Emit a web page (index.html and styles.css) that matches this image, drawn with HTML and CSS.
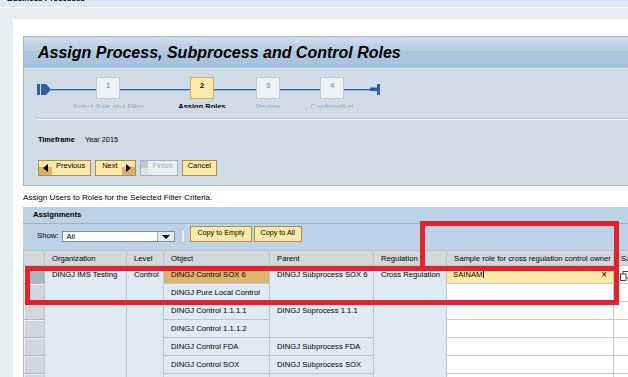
FILE: index.html
```html
<!DOCTYPE html>
<html lang="en">
<head>
    <meta charset="UTF-8">
    <title>Assign Process, Subprocess and Control Roles</title>
    <link rel="stylesheet" href="styles.css">
</head>
<body>

    <div class="topbar"><span class="topbar-title">Business Processes</span></div>

    <div class="shell">
        <div class="wizard">
            <h1 class="wizard-title">Assign Process, Subprocess and Control Roles</h1>
            <div class="wizard-body">
                <div class="roadmap">
                    <svg class="rm-start" width="14" height="13" viewBox="0 0 14 13">
                        <rect x="0" y="1" width="3" height="11"/>
                        <path d="M4 1h5l5 5.5-5 5.5H4z"/>
                    </svg>
                    <div class="rm-link" style="width: 45px"></div>
                    <div class="rm-step">
                        <div class="rm-box">1</div>
                        <div class="rm-label">Select Role and Filter</div>
                    </div>
                    <div class="rm-link" style="width: 70px"></div>
                    <div class="rm-step">
                        <div class="rm-box current">2</div>
                        <div class="rm-label current">Assign Roles</div>
                    </div>
                    <div class="rm-link" style="width: 42px"></div>
                    <div class="rm-step">
                        <div class="rm-box">3</div>
                        <div class="rm-label">Review</div>
                    </div>
                    <div class="rm-link" style="width: 40px"></div>
                    <div class="rm-step">
                        <div class="rm-box">4</div>
                        <div class="rm-label">Confirmation</div>
                    </div>
                    <div class="rm-link" style="width: 26px"></div>
                    <svg class="rm-end" width="10" height="11" viewBox="0 0 10 11">
                        <rect x="0" y="3.5" width="7" height="3.5"/>
                        <rect x="7" y="0" width="3" height="11"/>
                    </svg>
                </div>

                <div class="divider"></div>

                <div class="timeframe">
                    <span class="tf-label">Timeframe</span>
                    <span>Year 2015</span>
                </div>

                <div class="wiz-buttons">
                    <button class="btn btn-prev"><span class="btn-arrow"><i class="tri-left"></i></span><span class="btn-text">Previous</span></button>
                    <button class="btn btn-next"><span class="btn-text">Next</span><span class="btn-arrow"><i class="tri-right"></i></span></button>
                    <button class="btn btn-finish" disabled><span class="btn-ghost"></span><span class="btn-text">Finish</span></button>
                    <button class="btn btn-cancel"><span class="btn-text">Cancel</span></button>
                </div>
            </div>
        </div>

        <p class="intro">Assign Users to Roles for the Selected Filter Criteria.</p>

        <div class="tray">
            <div class="tray-head">Assignments</div>
            <div class="toolbar">
                <span class="show-label">Show:</span>
                <div class="select">
                    <span class="select-value">All</span>
                    <span class="select-btn"><i class="tri-down"></i></span>
                </div>
                <span class="tb-sep"></span>
                <button class="copy-btn">Copy to Empty</button>
                <button class="copy-btn">Copy to All</button>
            </div>

            <table class="grid">
                <colgroup>
                    <col style="width: 21px">
                    <col style="width: 82px">
                    <col style="width: 37px">
                    <col style="width: 106px">
                    <col style="width: 104px">
                    <col style="width: 73px">
                    <col style="width: 167px">
                    <col style="width: 40px">
                </colgroup>
                <thead>
                    <tr>
                        <th class="sel"></th>
                        <th>Organization</th>
                        <th>Level</th>
                        <th>Object</th>
                        <th>Parent</th>
                        <th>Regulation</th>
                        <th>Sample role for cross regulation control owner</th>
                        <th>Sample role</th>
                    </tr>
                </thead>
                <tbody>
                    <tr>
                        <td class="sel on"></td>
                        <td rowspan="7">DINGJ IMS Testing</td>
                        <td rowspan="7">Control</td>
                        <td class="obj-on">DINGJ Control SOX 6</td>
                        <td rowspan="2">DINGJ Subprocess SOX 6</td>
                        <td rowspan="7">Cross Regulation</td>
                        <td class="entry on">SAINAM<span class="caret"></span><span class="clear">×</span></td>
                        <td class="more">
                            <svg class="copy-icon" width="9" height="10" viewBox="0 0 9 10">
                                <rect x="3" y="0.5" width="5.5" height="6.5" fill="none" stroke="#444"/>
                                <rect x="0.5" y="3" width="5.5" height="6.5" fill="#fff" stroke="#444"/>
                            </svg>
                        </td>
                    </tr>
                    <tr>
                        <td class="sel"></td>
                        <td>DINGJ Pure Local Control</td>
                        <td class="entry"></td>
                        <td class="more"></td>
                    </tr>
                    <tr>
                        <td class="sel"></td>
                        <td>DINGJ Control 1.1.1.1</td>
                        <td rowspan="2">DINGJ Suprocess 1.1.1</td>
                        <td class="entry"></td>
                        <td class="more"></td>
                    </tr>
                    <tr>
                        <td class="sel"></td>
                        <td>DINGJ Control 1.1.1.2</td>
                        <td class="entry"></td>
                        <td class="more"></td>
                    </tr>
                    <tr>
                        <td class="sel"></td>
                        <td>DINGJ Control FDA</td>
                        <td>DINGJ Subprocess FDA</td>
                        <td class="entry"></td>
                        <td class="more"></td>
                    </tr>
                    <tr>
                        <td class="sel"></td>
                        <td>DINGJ Control SOX</td>
                        <td>DINGJ Subprocess SOX</td>
                        <td class="entry"></td>
                        <td class="more"></td>
                    </tr>
                    <tr>
                        <td class="sel"></td>
                        <td></td>
                        <td></td>
                        <td class="entry"></td>
                        <td class="more"></td>
                    </tr>
                </tbody>
            </table>
        </div>
    </div>

    <!-- review annotations drawn over the screen -->
    <div class="mark mark-col"></div>
    <div class="mark mark-row"></div>

</body>
</html>
```

FILE: styles.css
```css
:root {
    --shell-bg: #e9edf0;
    --top-bg: #dde9f4;
    --wizard-bg: #cfdbe7;
    --wizard-border: #a8b7c6;
    --tray-bg: #bcd2e6;
    --cell-bg: #dfeaf5;
    --cell-border: #b9c7d5;
    --btn-bg: #fbe9a7;
    --btn-border: #b98a4b;
    --btn-dark: #deae62;
    --road-color: #2d61a0;
    --mark-color: #e8202a;
}

* {
    box-sizing: border-box;
}

body {
    margin: 0;
    width: 628px;
    height: 377px;
    overflow: hidden;
    position: relative;
    background-color: var(--shell-bg);
    color: #000;
    font-family: "Liberation Sans", Arial, sans-serif;
    font-size: 7.7px;
}

.topbar {
    height: 8px;
    overflow: hidden;
    background-color: var(--top-bg);
    border-bottom: 1px solid #fff;
}

.topbar-title {
    display: block;
    margin-top: -5px;
    padding-left: 7px;
    font-size: 8px;
    font-weight: bold;
    line-height: 8px;
}

.shell {
    margin: 11px 0 0 13px;
    height: 358px;
    padding: 17px 0 0 10px;
    background-color: #fff;
}

/* wizard */

.wizard {
    border: 1px solid var(--wizard-border);
    border-right: none;
    background-color: var(--wizard-bg);
}

.wizard-title {
    margin: 0;
    height: 32px;
    padding-left: 14px;
    border-bottom: 1px solid #dfe7ef;
    background: linear-gradient(to bottom, #cfdbe9 0, #c9d8e7 6px, #bed1e4 7px, #bcd0e3 13px, #acc6de 14px, #a8c3dc 100%);
    font-size: 16px;
    font-style: italic;
    font-weight: bold;
    line-height: 31px;
    white-space: nowrap;
}

.wizard-body {
    padding: 8px 0 9px 13px;
}

.roadmap {
    display: flex;
    align-items: flex-start;
    height: 31px;
}

.roadmap > * {
    flex: none;
}

.rm-start {
    margin-top: 6px;
    fill: var(--road-color);
}

.rm-end {
    margin-top: 7px;
    fill: var(--road-color);
}

.rm-link {
    height: 1px;
    margin-top: 12px;
    background-color: var(--road-color);
    box-shadow: 0 1px 0 rgba(45, 97, 160, 0.35);
}

.rm-step {
    width: 24px;
    display: flex;
    flex-direction: column;
    align-items: center;
}

.rm-box {
    width: 24px;
    height: 22px;
    padding-top: 3px;
    border: 1px solid #c2cad2;
    background-color: #eef1f4;
    color: #9ba5af;
    font-size: 7.5px;
    font-weight: bold;
    line-height: 9px;
    text-align: center;
}

.rm-box.current {
    background-color: var(--btn-bg);
    border-color: #dfae5c;
    color: #000;
}

.rm-label {
    margin-top: 3px;
    height: 6px;
    overflow: hidden;
    white-space: nowrap;
    color: #a3abb3;
    font-size: 7.5px;
    line-height: 9px;
}

.rm-label.current {
    color: #000;
    font-weight: bold;
}

.divider {
    margin: 10px 0 0 1px;
    height: 2px;
    border-top: 1px solid #b7c3cf;
    background-color: #fff;
}

.timeframe {
    display: flex;
    margin: 15px 0 0 1px;
    font-size: 7.3px;
    line-height: 10px;
}

.tf-label {
    width: 47px;
    font-weight: bold;
}

.wiz-buttons {
    display: flex;
    gap: 4px;
    margin: 15px 0 0 1px;
}

.btn {
    display: flex;
    align-items: flex-start;
    height: 16px;
    padding: 0;
    border: 1px solid var(--btn-border);
    background-color: var(--btn-bg);
    color: #000;
    font-family: inherit;
    font-size: 7.5px;
    line-height: 9px;
}

.btn-arrow {
    display: flex;
    align-items: center;
    justify-content: center;
    align-self: stretch;
    width: 13px;
    background: linear-gradient(to bottom, var(--btn-bg) 45%, var(--btn-dark) 45%);
}

.tri-left,
.tri-right {
    width: 0;
    height: 0;
    border-top: 4px solid transparent;
    border-bottom: 4px solid transparent;
}

.tri-left {
    border-right: 5px solid #000;
}

.tri-right {
    border-left: 5px solid #000;
}

.btn-prev .btn-text {
    margin: 0 5px 0 4px;
}

.btn-next .btn-text {
    margin: 0 4px 0 6px;
}

.btn-finish {
    border-color: #a8b3be;
    background-color: #eceff2;
    color: #a6aeb6;
}

.btn-ghost {
    align-self: stretch;
    width: 7px;
    background: linear-gradient(to bottom, #c3cad1 50%, #dfe4e8 50%);
}

.btn-finish .btn-text {
    margin: 0 4px 0 5px;
}

.btn-cancel .btn-text {
    margin: 0 5px;
}

/* assignments */

.intro {
    margin: 7px 0 4px;
    font-size: 8.1px;
    line-height: 10px;
}

.tray {
    overflow: hidden;
}

.tray-head {
    height: 17px;
    padding-left: 10px;
    border-bottom: 1px solid #9db1c4;
    background-color: var(--tray-bg);
    font-weight: bold;
    line-height: 16px;
}

.toolbar {
    display: flex;
    align-items: flex-start;
    height: 26px;
    padding-left: 14px;
    background-color: var(--tray-bg);
}

.show-label {
    margin-top: 7px;
    line-height: 9px;
}

.select {
    display: flex;
    width: 113px;
    height: 11px;
    margin: 7px 0 0 4px;
    border: 1px solid #7f8f9f;
    background-color: #fff;
}

.select-value {
    flex: 1;
    padding-left: 3px;
    line-height: 9px;
}

.select-btn {
    display: flex;
    align-items: center;
    justify-content: center;
    width: 17px;
    border-left: 1px solid #9aa9b8;
    background-color: #e6eaee;
}

.tri-down {
    width: 0;
    height: 0;
    border-left: 4px solid transparent;
    border-right: 4px solid transparent;
    border-top: 4px solid #000;
}

.tb-sep {
    width: 2px;
    height: 10px;
    margin: 7px 6px 0 7px;
    background-color: #eef3f8;
}

.copy-btn {
    height: 16px;
    margin: 2px 2px 0 0;
    padding: 0 6px;
    border: 1px solid var(--btn-border);
    background-color: var(--btn-bg);
    font-family: inherit;
    font-size: 7.2px;
    line-height: 11px;
    vertical-align: top;
    display: flex;
    align-items: flex-start;
}

.grid {
    width: 630px;
    table-layout: fixed;
    border-collapse: collapse;
}

.grid th {
    height: 15px;
    padding: 0 7px;
    border: 1px solid #bac4ce;
    background-color: #d3d8dd;
    font-weight: normal;
    text-align: left;
    white-space: nowrap;
    overflow: hidden;
    line-height: 9px;
}

.grid tbody tr {
    height: 18px;
}

.grid td {
    padding: 4px 7px 0;
    border: 1px solid var(--cell-border);
    background-color: var(--cell-bg);
    vertical-align: top;
    line-height: 9px;
    white-space: nowrap;
    overflow: hidden;
}

.grid .sel {
    padding: 0;
}

.grid td.sel {
    border-color: #aeb7c0;
    background-color: #d2d6da;
    box-shadow: inset 1px 1px 0 #eceff1;
}

.grid td.sel.on {
    background-color: #a9b6c2;
}

.grid td.obj-on {
    background-color: #dfb46b;
}

.grid td.entry {
    border-color: #c3ccd5;
    background-color: #fff;
}

.grid td.entry.on {
    padding-left: 6px;
    background-color: #fbeaa6;
}

.caret {
    display: inline-block;
    width: 1px;
    height: 8px;
    margin-left: 1px;
    vertical-align: -1px;
    background-color: #000;
}

.clear {
    float: right;
    margin-right: -1px;
    font-size: 10px;
    line-height: 9px;
}

.grid td.more {
    padding-left: 6px;
    border-color: #c3ccd5;
    background-color: #fff;
}

.copy-icon {
    display: block;
    margin-top: 1px;
}

/* annotation boxes */

.mark {
    position: absolute;
    border: 5px solid var(--mark-color);
}

.mark-col {
    left: 420px;
    top: 221px;
    width: 199px;
    height: 50px;
}

.mark-row {
    left: 25px;
    top: 266px;
    width: 594px;
    height: 39px;
}
```
